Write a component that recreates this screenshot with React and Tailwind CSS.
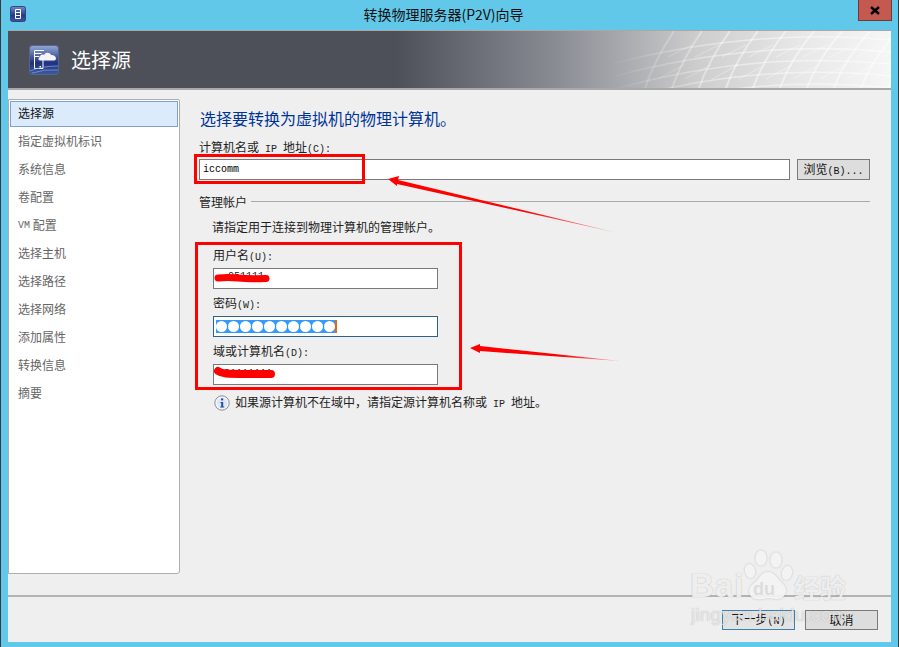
import React from 'react';

const steps = ['指定虚拟机标识', '系统信息', '卷配置', 'VM 配置', '选择主机', '选择路径', '选择网络', '添加属性', '转换信息', '摘要'];

const cjk = { fontFamily: '"Noto Sans CJK SC", "Noto Sans", sans-serif' };
const Latin = ({ children }) => <span className="font-['Liberation_Mono',monospace] text-[10px]">{children}</span>;

// wire globe behind the header, latitude lines then meridians
const latitudes = () => {
  const out = [];
  for (let i = 0; i < 6; i++) {
    out.push(`M${592 + i * 4} ${36 + i * 12} Q740 ${-4 + i * 11.5} 883 ${9 + i * 12}`);
  }
  return out.join(' ');
};

const meridians = () => {
  const out = [];
  for (let i = 0; i < 10; i++) {
    const x = 636 + i * 27;
    out.push(`M${x} 60 Q${x + 10} 30 ${x + 30 + i} 0`);
  }
  return out.join(' ');
};

const diagonals = () => {
  const out = [];
  for (let i = 0; i < 9; i++) {
    const x = 650 + i * 27;
    out.push(`M${x} 48 L${x + 26} 34 M${x + 10} 26 L${x + 34} 14`);
  }
  return out.join(' ');
};

const Field = ({ label, focused, children }) => (
  <div className="flex flex-col">
    <div className="h-[22px] leading-[17px] text-[12px] text-[#222]">{label}</div>
    <div className={`w-[225px] h-[21px] bg-white border flex items-center relative ${focused ? 'border-[#2c628b]' : 'border-[#7a7a7a]'}`}>
      {children}
    </div>
  </div>
);

export default function App() {
  return (
    <div style={cjk} className="relative w-[899px] h-[647px] overflow-hidden bg-[#62c8e9] border-x border-[#3a3a3a] flex flex-col">
      <div className="h-[30px] shrink-0 flex items-start relative">
        <svg className="ml-[9px] mt-[6px]" width="16" height="16" viewBox="0 0 16 16">
          <defs>
            <linearGradient id="ttl" x1="0" y1="0" x2="0" y2="1">
              <stop offset="0" stopColor="#6f8ac8" />
              <stop offset="0.6" stopColor="#243a8a" />
              <stop offset="1" stopColor="#3b55a0" />
            </linearGradient>
          </defs>
          <rect x="0.5" y="0.5" width="15" height="15" rx="2" fill="url(#ttl)" stroke="#33457f" />
          <path d="M5.5 3.5h5v9h-5z M5.5 6.5h5 M5.5 9.5h5" fill="none" stroke="#fff" />
        </svg>
        <div className="flex-1 text-center text-[14px] leading-[14px] pt-[7px] text-[#111] pl-[3px]">转换物理服务器(P2V)向导</div>
        <div className="w-[34px] h-[21px] mr-[6px] bg-[#c45a4f] border border-t-0 border-[#733a35] flex items-center justify-center">
          <svg width="10" height="9" viewBox="0 0 10 9">
            <path d="M1 1l8 7M9 1L1 8" stroke="#000" strokeWidth="2.4" />
          </svg>
        </div>
      </div>

      <div className="flex-1 ml-[7px] mr-[7px] mb-[5px] flex flex-col bg-[#efefef]">
        <div className="relative h-[60px] shrink-0 border-t border-b-2 border-t-[#a8a8a8] border-b-[#a9a9a9] flex items-center bg-[linear-gradient(90deg,#4d5059_0%,#4d5059_44%,#8a8c94_62%,#aaabb0_70%,#cdcdcd_78%,#e8e8e8_90%,#f6f6f6_100%)] overflow-hidden">
          <svg className="absolute inset-0" width="883" height="60" viewBox="0 0 883 60">
            <defs>
              <linearGradient id="meshFade" gradientUnits="userSpaceOnUse" x1="600" y1="0" x2="720" y2="0">
                <stop offset="0" stopColor="#fff" stopOpacity="0" />
                <stop offset="1" stopColor="#fff" stopOpacity="0.45" />
              </linearGradient>
            </defs>
            <path d={latitudes()} fill="none" stroke="url(#meshFade)" strokeWidth="1.5" />
            <path d={meridians()} fill="none" stroke="url(#meshFade)" strokeWidth="2" />
            <path d={diagonals()} fill="none" stroke="url(#meshFade)" strokeWidth="0.8" />
          </svg>
          <svg className="relative ml-[21px]" width="30" height="30" viewBox="0 0 30 30">
            <defs>
              <linearGradient id="hdr" x1="0" y1="0" x2="0" y2="1">
                <stop offset="0" stopColor="#93a9d6" />
                <stop offset="0.6" stopColor="#1f3080" />
                <stop offset="1" stopColor="#3d5ba2" />
              </linearGradient>
            </defs>
            <rect x="0.5" y="0.5" width="29" height="29" rx="3" fill="url(#hdr)" stroke="#56648c" />
            <path d="M5.5 5.5H15 M5.5 5.5V23.5H14V13 M5.5 8.5h7 M5.5 11.5h5" fill="none" stroke="#fff" />
            <rect x="10.5" y="21" width="1.5" height="1.5" fill="#fff" />
            <path d="M11 15.5c-2 0-2-3 0-3.5 0-2 2-3 4-2 1-3 6-3 7 0 2-.5 5 1 5 3.5 0 1-1 2-2 2z" fill="#f4f4f4" />
            <path d="M1 26q12-5 28-5M3 28q12-4 26-3" fill="none" stroke="#8aa4d6" strokeOpacity="0.7" />
          </svg>
          <div className="relative ml-[12px] text-[20px] leading-[24px] text-white">选择源</div>
        </div>

        <div className="flex-1 flex">
          <div className="w-[172px] ml-0 mt-[9px] mb-[21px] bg-white border border-[#aeaeae] rounded-tr-[2px] rounded-br-[3px] p-px text-[12px] shrink-0">
            <div className="h-[26px] pl-[7px] pb-[2px] flex items-center bg-[#dcebfc] border border-[#7da2ce] text-[#111]">选择源</div>
            <div className="flex flex-col">
              {steps.map(s => (
                <div key={s} className="h-[28px] pl-[8px] flex items-center text-[#666]">
                  {s === 'VM 配置' ? <><Latin>VM</Latin>&nbsp;配置</> : s}
                </div>
              ))}
            </div>
          </div>

          <div className="flex-1 pl-[19px] pr-[21px] pt-[9px] flex flex-col min-w-0">
            <div className="text-[16px] leading-[20px] pt-[9px] pl-px text-[#003399]">选择要转换为虚拟机的物理计算机。</div>
            <div className="text-[12px] text-[#222] mt-[11px] h-[15px] leading-[15px]">计算机名或<Latin>&nbsp;IP&nbsp;</Latin>地址<Latin>(C):</Latin></div>
            <div className="flex mt-[5px] gap-[7px]">
              <div className="flex-1 h-[21px] bg-white border border-[#7a7a7a] pl-[3px] flex items-center font-['Liberation_Mono',monospace] text-[10px] text-black">iccomm</div>
              <button className="w-[73px] h-[21px] bg-[#dddddd] border border-[#7a7a7a] text-[12px] text-[#111]">浏览<Latin>(B)...</Latin></button>
            </div>

            <div className="flex items-center mt-[14px] gap-[4px] h-[15px]">
              <span className="text-[12px] text-[#222]">管理帐户</span>
              <span className="flex-1 h-px bg-[#aaaaaa]" />
            </div>
            <div className="ml-[13px] text-[12px] text-[#222] mt-[10px] leading-[15px]">请指定用于连接到物理计算机的管理帐户。</div>

            <div className="ml-[14px] mt-[12px] flex flex-col gap-[5px]">
              <Field label={<>用户名<Latin>(U):</Latin></>}>
                <span className="pl-[14px] pb-[4px] font-['Liberation_Mono',monospace] text-[10px] text-[#222]">051111</span>
                <svg className="absolute left-0 top-0" width="60" height="19" viewBox="0 0 60 19">
                  <path d="M4 9q10-1 20 0t28 .5" fill="none" stroke="#f00" strokeWidth="7" strokeLinecap="round" />
                </svg>
              </Field>
              <Field focused label={<>密码<Latin>(W):</Latin></>}>
                <div className="ml-[2px] h-[13px] bg-[#3399ff] flex items-center gap-px border-r-2 border-[#d9700f]">
                  {Array.from({ length: 10 }).map((_, i) => (
                    <span key={i} className="w-[11px] h-[11px] rounded-full bg-white" />
                  ))}
                </div>
              </Field>
              <Field label={<>域或计算机名<Latin>(D):</Latin></>}>
                <span className="pl-[10px] pb-[2px] font-['Liberation_Mono',monospace] text-[10px] text-[#222]">01111111</span>
                <svg className="absolute left-0 top-0" width="64" height="19" viewBox="0 0 64 19">
                  <path d="M4 6q3 2 8 2.5t45 .5" fill="none" stroke="#f00" strokeWidth="8" strokeLinecap="round" />
                </svg>
              </Field>
            </div>

            <div className="ml-[15px] mt-[8px] flex items-center gap-[5px]">
              <svg width="16" height="16" viewBox="0 0 16 16">
                <circle cx="8" cy="8" r="7.2" fill="#f2f4f8" stroke="#8a8f98" />
                <circle cx="8" cy="8" r="5.2" fill="#dfe7f5" />
                <rect x="7" y="3.4" width="2.2" height="2" fill="#1d4fa8" />
                <path d="M6.4 7h2.8v4.4h1v1H6.2v-1h1V8H6.4z" fill="#1d4fa8" />
              </svg>
              <span className="text-[12px] text-[#222]">如果源计算机不在域中，请指定源计算机名称或<Latin>&nbsp;IP&nbsp;</Latin>地址。</span>
            </div>
          </div>
        </div>

        <div className="h-[47px] shrink-0 border-t-2 border-[#b3b3b3] flex items-start justify-end gap-[10px] pt-[13px] pr-[13px]">
          <button className="w-[73px] h-[20px] bg-[#e3e3e3] border border-[#3c7fb1] text-[12px] leading-[16px] text-[#111]">下一步<Latin>(N)</Latin></button>
          <button className="w-[73px] h-[20px] bg-[#dddddd] border border-[#7a7a7a] text-[12px] leading-[16px] text-[#111]">取消</button>
        </div>
      </div>

      {/* annotations drawn over the dialog */}
      <div className="absolute left-[193px] top-[154px] w-[171px] h-[30px] border-[3px] border-[#f00]" />
      <div className="absolute left-[194px] top-[242px] w-[267px] h-[148px] border-[3px] border-[#f00]" />
      <svg className="absolute left-[-1px] top-0 pointer-events-none" width="899" height="647" viewBox="0 0 899 647">
        <defs>
          <linearGradient id="fade1" gradientUnits="userSpaceOnUse" x1="388" y1="179" x2="618" y2="233">
            <stop offset="0.6" stopColor="#f00" />
            <stop offset="1" stopColor="#f00" stopOpacity="0.3" />
          </linearGradient>
          <linearGradient id="fade2" gradientUnits="userSpaceOnUse" x1="470" y1="348" x2="620" y2="361">
            <stop offset="0.6" stopColor="#f00" />
            <stop offset="1" stopColor="#f00" stopOpacity="0.3" />
          </linearGradient>
        </defs>
        <path d="M388 179L399 176L398 180L618 233L397 184L397 186Z" fill="url(#fade1)" />
        <path d="M470 348L480 344L480 346L620 361L480 351L480 353Z" fill="url(#fade2)" />
      </svg>

      {/* watermark */}
      <div className="absolute left-[689px] top-[548px] w-[170px] h-[84px] pointer-events-none [text-shadow:0_0_1px_rgba(110,110,110,0.55)]">
        <svg className="absolute left-[53px] top-0 drop-shadow-[0_0_1px_rgba(110,110,110,0.4)]" width="52" height="54" viewBox="0 0 52 54" fill="#f8f8f8" fillOpacity="0.9">
          <ellipse cx="7" cy="23" rx="5" ry="7" transform="rotate(-15 7 23)" />
          <ellipse cx="18" cy="10" rx="5.5" ry="7.5" />
          <ellipse cx="33" cy="12" rx="5.5" ry="7.5" />
          <ellipse cx="44" cy="25" rx="5" ry="7" transform="rotate(15 44 25)" />
          <path d="M25 24c7 0 9 7 14 11 7 6 4 16-5 16-4 0-6-1-9-1s-6 2-11 1C5 50 4 41 10 36c6-4 8-12 15-12z" />
        </svg>
        <div className="absolute left-0 top-[20px] font-['Liberation_Sans',sans-serif] font-bold text-[33px] leading-[36px] tracking-[1px] text-[#f8f8f8]/90">Bai</div>
        <div className="absolute left-[63px] top-[30px] font-['Liberation_Sans',sans-serif] font-bold text-[18px] leading-[22px] text-[#dcdcdc] [text-shadow:none]">du</div>
        <div className="absolute left-[104px] top-[24px] text-[26px] leading-[30px] font-bold text-[#f8f8f8]/90">经验</div>
        <div className="absolute left-px top-[56px] font-['Liberation_Sans',sans-serif] text-[19px] leading-[22px] tracking-[0.2px] text-[#f8f8f8]/75">jingyan.baidu.com</div>
      </div>
    </div>
  );
}
